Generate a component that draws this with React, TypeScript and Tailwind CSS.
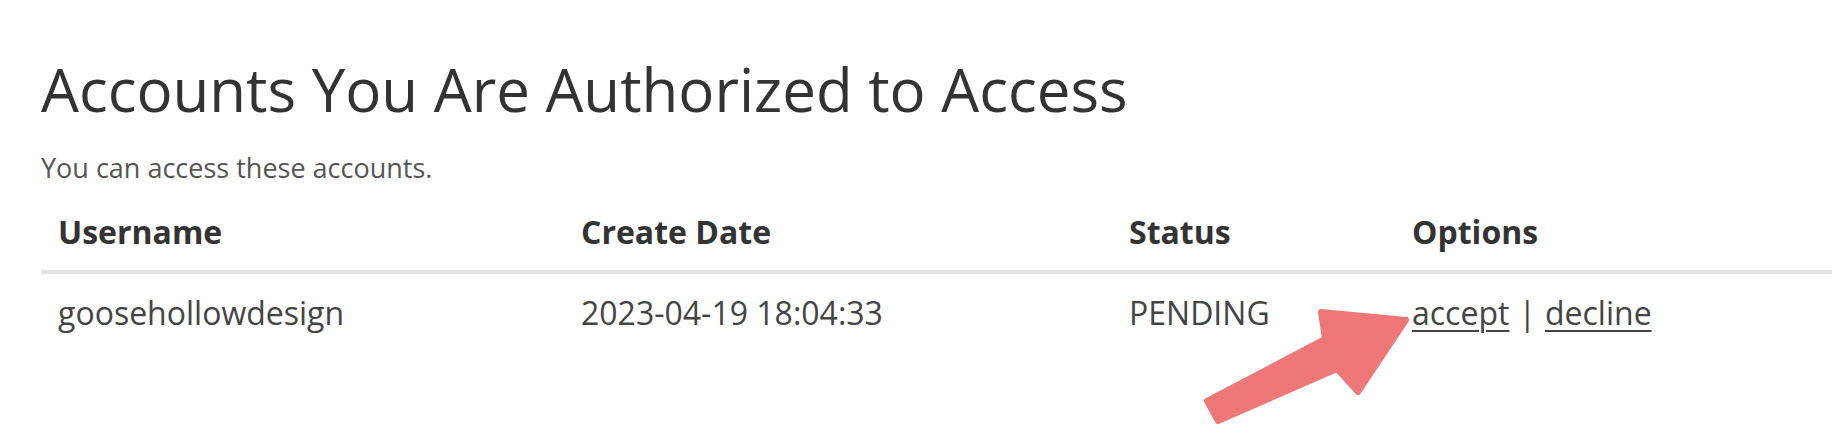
import React from 'react';

// Accounts table with one pending invite, plus the red annotation arrow
// pointing at the "accept" link.

const COLS = 'grid grid-cols-[523px_548px_283px_1fr]';

function Arrow() {
  return (
    <svg
      className="absolute left-0 top-0 pointer-events-none"
      width="1832"
      height="434"
      viewBox="0 0 1832 434"
    >
      <polygon
        points="1207,401 1325,339 1321,312 1406,320 1358,392 1337,369 1218,421"
        fill="#ee7777"
        stroke="#ee7777"
        strokeWidth="6"
        strokeLinejoin="round"
      />
    </svg>
  );
}

export default function App() {
  return (
    <div className="relative w-[1832px] h-[434px] bg-white overflow-hidden font-['Open_Sans',sans-serif]">
      <div className="pl-[41px] pt-[59px]">
        <h1 className="text-[60px] leading-[60px] font-normal text-[#333]">
          Accounts You Are Authorized to Access
        </h1>
        <p className="mt-[31px] text-[27px] leading-[36px] text-[#555]">You can access these accounts.</p>

        <div className="mt-[26px]">
          <div className={`${COLS} border-b-4 border-[#e3e3e3] pb-[18px] text-[32px] leading-[40px] font-bold text-[#333]`}>
            <div className="pl-[17px]">Username</div>
            <div className="pl-[17px]">Create Date</div>
            <div className="pl-[17px]">Status</div>
            <div className="pl-[17px]">Options</div>
          </div>
          <div className={`${COLS} pt-[19px] text-[32px] leading-[40px] text-[#444]`}>
            <div className="pl-[17px]">goosehollowdesign</div>
            <div className="pl-[17px]">2023-04-19 18:04:33</div>
            <div className="pl-[17px]">PENDING</div>
            <div className="pl-[17px]">
              <a href="#" className="underline underline-offset-[5px] decoration-2">accept</a>
              <span className="mx-[9px]">|</span>
              <a href="#" className="underline underline-offset-[5px] decoration-2">decline</a>
            </div>
          </div>
        </div>
      </div>
      <Arrow />
    </div>
  );
}
